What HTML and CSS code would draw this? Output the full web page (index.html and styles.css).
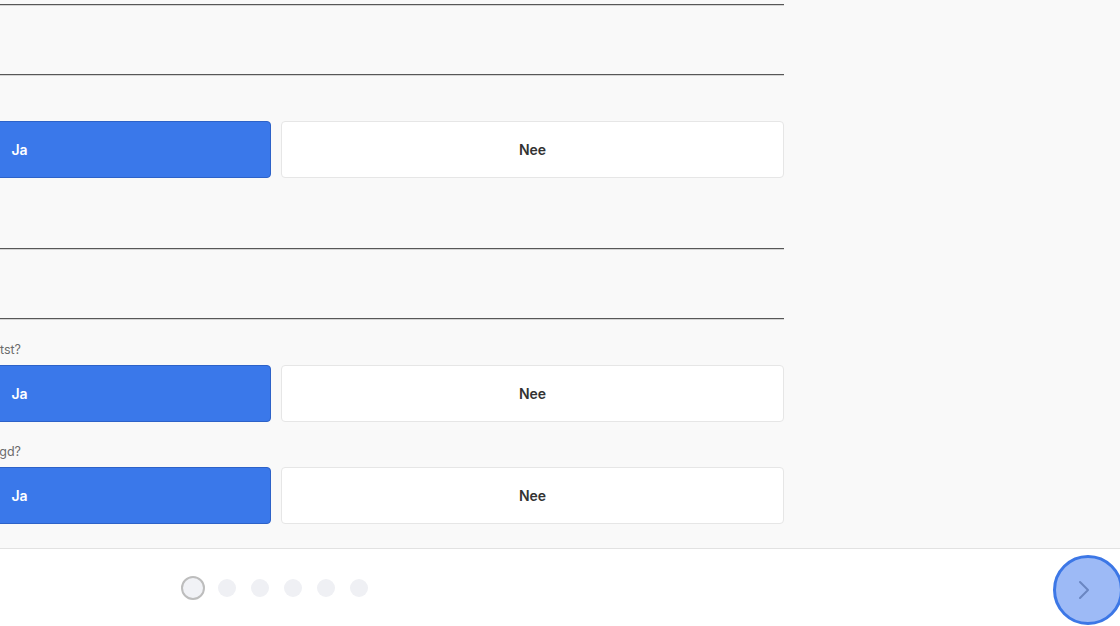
FILE: index.html
```html
<!DOCTYPE html>
<html lang="nl">
<head>
  <meta charset="UTF-8">
  <meta name="viewport" content="width=device-width, initial-scale=1.0">
  <title>Vragenlijst</title>
  <link rel="stylesheet" href="styles.css">
</head>
<body>

  <div class="page">
    <!-- Form section -->
    <div class="form-area">
      <div class="form-column">
        <div class="field field-first"></div>
        <div class="field"></div>

        <div class="choice-row">
          <button class="choice choice-active">Ja</button>
          <button class="choice">Nee</button>
        </div>

        <div class="field field-after-row"></div>
        <div class="field"></div>

        <div class="question">Is de omvormer geplaatst?</div>
        <div class="choice-row">
          <button class="choice choice-active">Ja</button>
          <button class="choice">Nee</button>
        </div>

        <div class="question question-next">Is de bekabeling aangelegd?</div>
        <div class="choice-row">
          <button class="choice choice-active">Ja</button>
          <button class="choice">Nee</button>
        </div>
      </div>
    </div>

    <!-- Footer with step dots and next button -->
    <div class="footer">
      <div class="steps">
        <span class="step step-current"></span>
        <span class="step"></span>
        <span class="step"></span>
        <span class="step"></span>
        <span class="step"></span>
        <span class="step"></span>
      </div>
      <button class="next-button" aria-label="Volgende">
        <svg width="14" height="20" viewBox="0 0 14 20">
          <path d="M3 2 L11 10 L3 18" fill="none" stroke="#6a86c2" stroke-width="2" stroke-linecap="round" stroke-linejoin="round"/>
        </svg>
      </button>
    </div>
  </div>

</body>
</html>
```

FILE: styles.css
```css
body {
  margin: 0;
  font-family: 'Inter', 'Open Sans', sans-serif;
  background-color: #f9f9f9;
  overflow: hidden;
}

.page {
  display: flex;
  flex-direction: column;
  height: 626px;
}

.form-area {
  height: 548px;
  overflow: hidden;
}

.form-column {
  width: 1016px;
  margin-left: -232px;
  display: flex;
  flex-direction: column;
}

/* Input fields only show their bottom line */
.field {
  height: 69px;
  border-bottom: 1px solid #575757;
  box-shadow: 0 1px 0 #d4d4d4;
}

.field-first {
  margin-top: -65px;
}

.field-after-row {
  margin-top: 1px;
}

.choice-row {
  display: flex;
  gap: 10px;
  height: 57px;
  margin-top: 46px;
}

.question + .choice-row {
  margin-top: 7px;
}

.choice {
  flex: 1;
  background-color: #ffffff;
  border: 1px solid #e6e6e6;
  border-radius: 4px;
  font-family: inherit;
  font-size: 14px;
  font-weight: 600;
  color: #333;
  cursor: pointer;
}

.choice-active {
  background-color: #3a78ea;
  border-color: #2d62c8;
  color: #ffffff;
}

.question {
  width: 253px;
  margin-top: 23px;
  height: 16px;
  line-height: 16px;
  font-size: 12.5px;
  color: #6b6b6b;
  text-align: right;
  white-space: nowrap;
}

.question-next {
  margin-top: 22px;
}

.footer {
  flex: 1;
  display: flex;
  align-items: center;
  justify-content: space-between;
  background-color: #ffffff;
  border-top: 1px solid #e2e2e2;
  padding-left: 181px;
  overflow: hidden;
}

.steps {
  display: flex;
  align-items: center;
  gap: 15px;
}

.step {
  width: 18px;
  height: 18px;
  border-radius: 50%;
  background-color: #eff0f4;
}

.step-current {
  width: 20px;
  height: 20px;
  margin-right: -2px;
  border: 2px solid #bdbdbd;
  background-color: #f1f2f6;
}

.next-button {
  width: 70px;
  height: 70px;
  margin-right: -3px;
  margin-top: 5px;
  border-radius: 50%;
  border: 3px solid #3c77e6;
  background-color: #9dbaf6;
  display: flex;
  align-items: center;
  justify-content: center;
  padding: 0 8px 0 0;
  cursor: pointer;
}
```
